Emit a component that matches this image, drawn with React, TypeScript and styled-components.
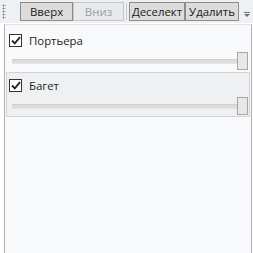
import React, {useState} from "react";
import styled, {createGlobalStyle} from "styled-components";

const GlobalStyle = createGlobalStyle`
  html, body {
    margin: 0;
    padding: 0;
    background: white;
  }
  body {
    font-family: "Open Sans", "Noto Sans", "DejaVu Sans", sans-serif;
    font-size: 11.4px;
    color: #1e1e1e;
  }
`;

const Page = styled.div`
  width: 253px;
  height: 253px;
  display: flex;
  flex-direction: column;
  overflow: hidden;
`;

const Toolbar = styled.div`
  height: 23px;
  display: flex;
  align-items: center;
  background: #eef0f3;
  padding: 0 3px 0 2px;
  box-sizing: border-box;
`;

const Grip = styled.div`
  width: 4px;
  height: 15px;
  margin-right: 14px;
  background-image: radial-gradient(circle, #7d828c 0.9px, transparent 1.1px);
  background-size: 3px 3px;
`;

const ToolButton = styled.button<{ $width: number; $disabled?: boolean }>`
  width: ${p => p.$width}px;
  height: 19px;
  margin: 0;
  padding: 0;
  font: inherit;
  line-height: 17px;
  color: ${p => p.$disabled ? "#9aa0a8" : "#1a1a1a"};
  background: ${p => p.$disabled ? "#e9eaec" : "#dcdcdc"};
  border: 1px solid ${p => p.$disabled ? "#c4c6ca" : "#8c8c8c"};
  box-sizing: border-box;
  cursor: default;
`;

const Separator = styled.div`
  width: 1px;
  height: 17px;
  margin: 0 2px 0 2px;
  background: #c8ccd2;
`;

const Overflow = styled.div`
  margin-left: auto;
  width: 7px;
  height: 8px;
  align-self: flex-end;
  margin-bottom: 3px;
  display: flex;
  flex-direction: column;
  align-items: center;
  gap: 1px;
  &::before {
    content: "";
    width: 6px;
    height: 1px;
    background: #6b7079;
  }
  &::after {
    content: "";
    width: 0;
    height: 0;
    border-left: 3px solid transparent;
    border-right: 3px solid transparent;
    border-top: 3px solid #6b7079;
  }
`;

const Panel = styled.div`
  flex: 1;
  margin: 1px 1px 0 4px;
  border: 1px solid #aeb0b8;
  border-top-color: #dfe1e5;
  border-bottom: none;
  background: #f8f9fb;
  padding: 2px 1px 0 1px;
`;

const Item = styled.div<{ $active?: boolean }>`
  height: 45px;
  padding: 0 0 0 2px;
  box-sizing: border-box;
  border: 1px solid ${p => p.$active ? "#d2d4d8" : "transparent"};
  background: ${p => p.$active ? "#eff0f2" : "transparent"};
  display: flex;
  flex-direction: column;
`;

const Row = styled.label`
  display: flex;
  align-items: center;
  height: 24px;
  padding-top: 2px;
  box-sizing: border-box;
  gap: 7px;
`;

const Box = styled.span`
  width: 11px;
  height: 11px;
  border: 1px solid #333;
  background: white;
  display: flex;
  align-items: center;
  justify-content: center;
`;

const Name = styled.span`
  color: #1e1e1e;
`;

const Slider = styled.div`
  height: 20px;
  display: flex;
  align-items: center;
  padding-left: 3px;
`;

const Track = styled.div`
  flex: 1;
  height: 3px;
  background: #dcdcdc;
  border-top: 1px solid #cfcfcf;
  border-bottom: 1px solid #e6e6e6;
`;

const Thumb = styled.div`
  width: 9px;
  height: 16px;
  margin-right: 1px;
  background: #e8e8e8;
  border: 1px solid #a6a6a6;
`;

function Check() {
  return (
    <svg width="10" height="9" viewBox="0 0 10 9">
      <path d="M1 4.5 L3.8 7.3 L9 1.2" fill="none" stroke="#222" strokeWidth="1.8"/>
    </svg>
  );
}

const layers = ["Портьера", "Багет"];

export default function App() {
  const [active] = useState(1);
  return (
    <Page>
      <GlobalStyle/>
      <Toolbar>
        <Grip/>
        <ToolButton $width={53}>Вверх</ToolButton>
        <ToolButton $width={51} $disabled>Вниз</ToolButton>
        <Separator/>
        <ToolButton $width={56}>Деселект</ToolButton>
        <ToolButton $width={54}>Удалить</ToolButton>
        <Overflow/>
      </Toolbar>
      <Panel>
        {layers.map((name, i) =>
          <Item key={name} $active={i === active}>
            <Row>
              <Box><Check/></Box>
              <Name>{name}</Name>
            </Row>
            <Slider>
              <Track/>
              <Thumb/>
            </Slider>
          </Item>
        )}
      </Panel>
    </Page>
  );
}
